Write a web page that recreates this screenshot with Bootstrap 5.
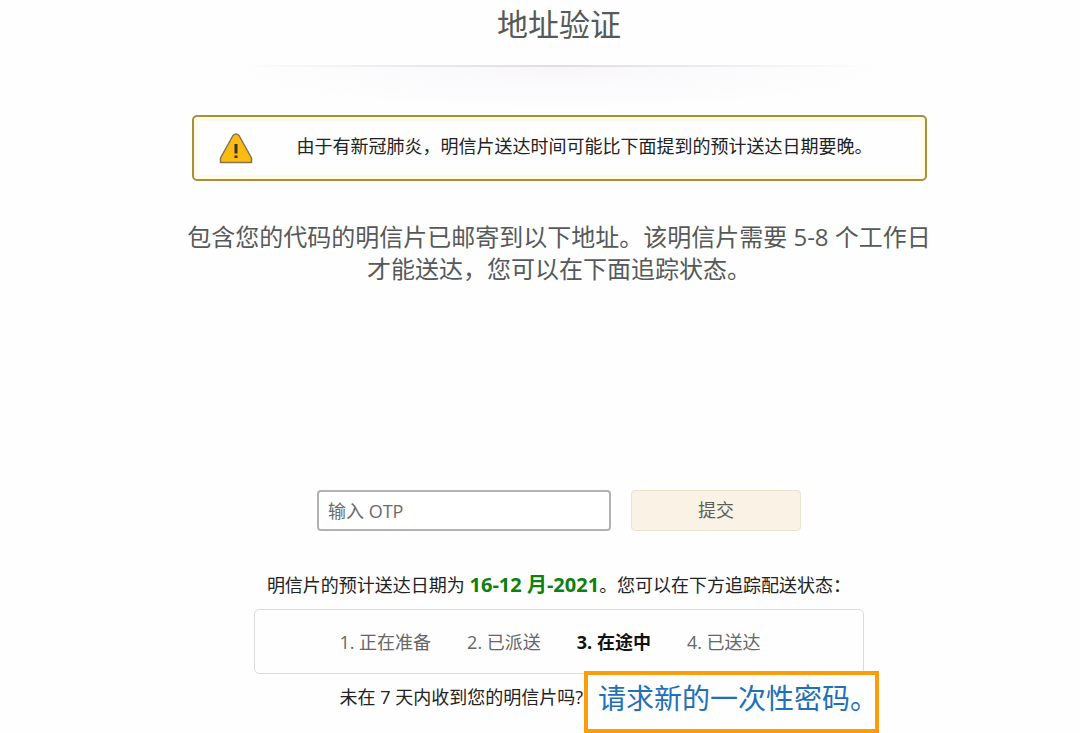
<!DOCTYPE html>
<html lang="zh-CN">
<head>
<meta charset="utf-8">
<meta name="viewport" content="width=device-width, initial-scale=1">
<title>地址验证</title>
<link href="https://cdn.jsdelivr.net/npm/bootstrap@5.3.0/dist/css/bootstrap.min.css" rel="stylesheet">
<style>
  body { background: #fefefe; color: #222; font: 18px/24px "Open Sans", "Noto Sans CJK SC", sans-serif; }
  .verify-page { max-width: 773px; padding-left: 38px; box-sizing: border-box; }
  .page-title { font-size: 31px; line-height: 48px; font-weight: 400; color: #565959; }
  .title-rule { height: 50px; margin-top: 17px; background: radial-gradient(ellipse 50% 100% at 50% 0, #f8f6fa, #fefefe 90%); }
  .title-rule::before { content: ""; display: block; height: 2px; margin: 0 60px 0 48px; background: linear-gradient(90deg, transparent, #dedede 50%, transparent); }
  .notice { border: 2px solid #a88f3c; border-radius: 5px; padding: 15px 52px 15px 25px; box-shadow: inset 0 0 0 4px #fffbe4; min-height: 66px; margin-bottom: 40px; }
  .notice-icon { width: 34px; height: 32px; flex: none; }
  .notice-text { line-height: 24px; padding-bottom: 4px; }
  .intro { font-size: 24px; line-height: 32px; color: #565959; margin: 0 -8px; }
  .mail-address { min-height: 205px; }
  .otp-form { max-width: 484px; }
  .otp-input { border: 2px solid #b2b2b2; border-radius: 4px; height: 41px; padding: 4px 9px; font-size: 18px; background: #fff; color: #333; }
  .otp-input::placeholder { color: #6b6b6b; }
  .otp-submit { width: 170px; height: 41px; flex: none; padding: 4px; font-size: 18px; color: #5c5c58; border: 1px solid #e9e3cd; border-radius: 4px; background: #f9f2e5; }
  .date-line { margin: 42px 0 12px; }
  .delivery-date { color: #0d800d; font-size: 20px; }
  .tracking { max-width: 610px; }
  .steps { border: 1px solid #dddadf; border-radius: 5px; min-height: 65px; gap: 36px; padding-right: 18px; color: #666; }
  .step-now { color: #111; font-weight: 700; }
  .resend { margin: -3px -15px 0 0; }
  .resend-text { padding: 14px 1px 0 0; }
  .callout { position: relative; width: 295px; height: 62px; padding: 3px 10px; border: 4px solid #fd9c0b; background: #fefefe; color: #2070b8; font-size: 28px; line-height: 40px; }
</style>
</head>
<body>
<main class="verify-page mx-auto">
  <h1 class="page-title text-center mb-0">地址验证</h1>
  <div class="title-rule"></div>
  <div class="notice d-flex align-items-center justify-content-between" role="alert">
    <svg class="notice-icon" viewBox="0 0 34 32" aria-hidden="true">
      <path d="M14 3.500Q17 .5 20 3.500L32.500 26V30.500H1.500V26Z" fill="#fcbb10" stroke="#817457" stroke-width="1.500" stroke-linejoin="round"/>
      <path d="M15.500 12h3v9.500h-3zM15.500 23.500h3v2.500h-3z" fill="#333"/>
    </svg>
    <span class="notice-text">由于有新冠肺炎，明信片送达时间可能比下面提到的预计送达日期要晚。</span>
  </div>
  <p class="intro text-center">包含您的代码的明信片已邮寄到以下地址。该明信片需要 5-8 个工作日<br>才能送达，您可以在下面追踪状态。</p>
  <div class="mail-address"></div>
  <form class="otp-form d-flex mx-auto">
    <input class="otp-input form-control me-3" type="text" placeholder="输入 OTP" aria-label="输入 OTP">
    <button class="otp-submit btn ms-1" type="submit">提交</button>
  </form>
  <section class="tracking mx-auto">
    <p class="date-line text-center">明信片的预计送达日期为 <strong class="delivery-date">16-12 月-2021</strong>。您可以在下方追踪配送状态：</p>
    <div class="steps d-flex justify-content-center align-items-center">
      <span>1. 正在准备</span><span>2. 已派送</span><span class="step-now">3. 在途中</span><span>4. 已送达</span>
    </div>
    <div class="resend d-flex justify-content-end">
      <span class="resend-text text-nowrap">未在 7 天内收到您的明信片吗?</span>
      <a class="callout text-decoration-none text-nowrap flex-shrink-0" href="#">请求新的一次性密码。</a>
    </div>
  </section>
</main>
<script src="https://cdn.jsdelivr.net/npm/bootstrap@5.3.0/dist/js/bootstrap.bundle.min.js"></script>
</body>
</html>
